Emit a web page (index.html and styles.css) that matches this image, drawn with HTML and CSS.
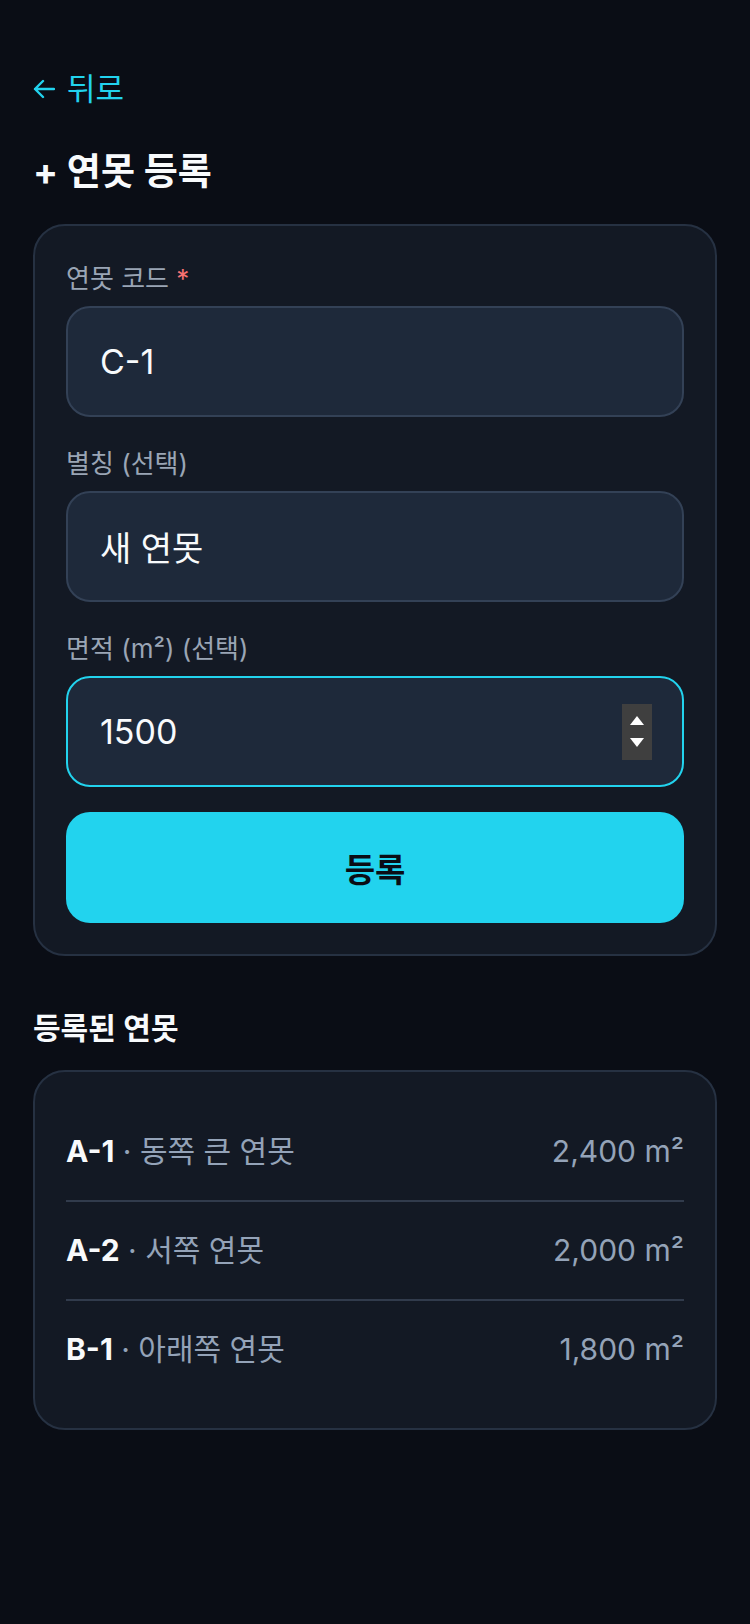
FILE: index.html
```html
<!DOCTYPE html>
<html lang="ko">
<head>
  <meta charset="UTF-8" />
  <meta name="viewport" content="width=device-width, initial-scale=1.0" />
  <title>연못 등록</title>
  <link rel="stylesheet" href="styles.css">
</head>
<body>
  <div class="page">
    <a class="back" href="#">
      <svg class="back-icon" viewBox="0 0 22 20" width="22" height="20">
        <path d="M21 10H2M10 2L2 10L10 18" fill="none" stroke="currentColor" stroke-width="2.4" stroke-linecap="round" stroke-linejoin="round"/>
      </svg>
      <span>뒤로</span>
    </a>

    <h1 class="title">+ 연못 등록</h1>

    <form class="card form-card" onsubmit="return false">
      <div class="field">
        <label for="code">연못 코드 <span class="req">*</span></label>
        <input class="input" id="code" type="text" value="C-1" />
      </div>
      <div class="field">
        <label for="alias">별칭 (선택)</label>
        <input class="input" id="alias" type="text" value="새 연못" />
      </div>
      <div class="field">
        <label for="area">면적 (m²) (선택)</label>
        <div class="input input-focus">
          <input class="input-bare" id="area" type="text" value="1500" />
          <div class="spin">
            <span class="tri-up"></span>
            <span class="tri-down"></span>
          </div>
        </div>
      </div>
      <button class="submit" type="submit">등록</button>
    </form>

    <h2 class="section-title">등록된 연못</h2>
    <div class="card list-card">
      <div class="row">
        <div class="name"><b>A-1</b> · 동쪽 큰 연못</div>
        <div class="area">2,400 m²</div>
      </div>
      <div class="row">
        <div class="name"><b>A-2</b> · 서쪽 연못</div>
        <div class="area">2,000 m²</div>
      </div>
      <div class="row">
        <div class="name"><b>B-1</b> · 아래쪽 연못</div>
        <div class="area">1,800 m²</div>
      </div>
    </div>
  </div>
</body>
</html>
```

FILE: styles.css
```css
/* 기본 */
body {
  margin: 0;
  background: #0a0d15;
  color: #f1f5f9;
  font-family: "Inter", "Noto Sans CJK KR", sans-serif;
}
.page {
  padding: 68px 33px 80px;
}
.back {
  display: flex;
  align-items: center;
  gap: 12px;
  color: #22d3ee;
  text-decoration: none;
  font-size: 31px;
  line-height: 42px;
}
.back-icon {
  display: block;
}
.title {
  margin: 38px 0 28px;
  font-size: 37px;
  line-height: 48px;
  font-weight: 700;
  color: #f8fafc;
}
.card {
  background: #131924;
  border: 2px solid #263142;
  border-radius: 32px;
}
.form-card {
  padding: 33px 31px 31px;
  display: flex;
  flex-direction: column;
  gap: 27px;
}
.field label {
  display: block;
  font-size: 26px;
  line-height: 40px;
  color: #9aa5b5;
  margin-bottom: 7px;
}
.req {
  color: #f87171;
}
.input {
  box-sizing: border-box;
  width: 100%;
  height: 111px;
  padding: 0 32px 0 32px;
  background: #1e293a;
  border: 2px solid #334156;
  border-radius: 24px;
  color: #f8fafc;
  font-family: inherit;
  font-size: 34px;
  outline: none;
}
.input-focus {
  display: flex;
  align-items: center;
  border-color: #22d3ee;
  padding-right: 30px;
}
.input-bare {
  flex: 1;
  min-width: 0;
  background: transparent;
  border: none;
  outline: none;
  color: #f8fafc;
  font-family: inherit;
  font-size: 34px;
  padding: 0;
}
.spin {
  width: 30px;
  height: 56px;
  background: #3f3f3f;
  display: flex;
  flex-direction: column;
  align-items: center;
  justify-content: space-evenly;
}
.tri-up, .tri-down {
  width: 0;
  height: 0;
  border-left: 7px solid transparent;
  border-right: 7px solid transparent;
}
.tri-up {
  border-bottom: 9px solid #fff;
}
.tri-down {
  border-top: 9px solid #fff;
}
.submit {
  height: 111px;
  margin-top: -2px;
  border: none;
  border-radius: 24px;
  background: #22d3ee;
  color: #0a0d15;
  font-family: inherit;
  font-size: 33px;
  font-weight: 700;
  cursor: pointer;
}
.section-title {
  margin: 50px 0 20px;
  font-size: 30px;
  line-height: 44px;
  font-weight: 600;
  color: #f8fafc;
}
.list-card {
  padding: 31px 31px 30px;
}
.row {
  display: flex;
  justify-content: space-between;
  align-items: center;
  padding: 24px 0;
  line-height: 49px;
  font-size: 30px;
  color: #94a3b8;
  border-bottom: 2px solid #313b4c;
}
.row:last-child {
  border-bottom: none;
}
.row b {
  color: #f8fafc;
  font-weight: 700;
}
```
